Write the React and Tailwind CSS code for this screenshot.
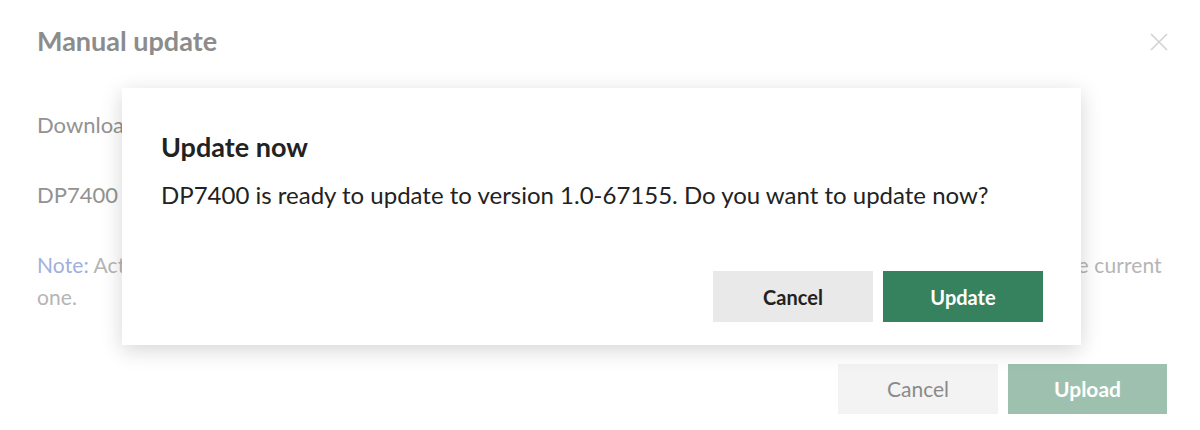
export default function App() {
    return (
        <div className="relative w-[1200px] h-[430px] bg-white overflow-hidden font-['Lato','Liberation_Sans',sans-serif]">
            {/* background modal */}
            <div className="flex flex-col pt-[25px] pl-[37px] pr-[33px]">
                <div className="flex items-center justify-between">
                    <h2 className="text-[27px] leading-[32px] font-bold text-[#8c8c8c]">Manual update</h2>
                    <svg width="20" height="20" viewBox="0 0 20 20" className="mr-[-2px] mt-[1px]">
                        <path d="M2 2 L18 18 M18 2 L2 18" stroke="#d2d2d2" strokeWidth="1.6" fill="none" />
                    </svg>
                </div>
                <p className="mt-[52px] text-[22px] leading-[32px] text-[#929292]">Download the firmware file from the support site and upload it here.</p>
                <p className="mt-[38px] text-[22px] leading-[32px] text-[#929292]">DP7400 current firmware version: 1.0-66012</p>
                <p className="mt-[38px] text-[21px] leading-[32px] tracking-[0.1px] text-[#b5b5b5] whitespace-nowrap">
                    <span className="text-[#9fb0dc]">Note:</span> Activating the uploaded firmware will restart the device, and then the new firmware version will replace the current<br />one.
                </p>
                <div className="flex justify-end gap-[10px] mt-[51px]">
                    <button className="w-[160px] h-[50px] bg-[#f3f3f3] text-[#8a8a8a] text-[21px]">Cancel</button>
                    <button className="w-[159px] h-[50px] bg-[#9dc1ae] text-white text-[21px] font-bold">Upload</button>
                </div>
            </div>

            {/* confirm dialog */}
            <div className="absolute left-[122px] top-[88px] w-[959px] h-[257px] bg-white shadow-[0_5px_20px_rgba(0,0,0,0.17)] flex flex-col pt-[44px] pl-[39px] pr-[38px]">
                <h3 className="text-[27px] leading-[30px] font-bold text-[#222]">Update now</h3>
                <p className="mt-[18px] text-[24px] leading-[30px] text-[#222]">DP7400 is ready to update to version 1.0-67155. Do you want to update now?</p>
                <div className="flex justify-end gap-[10px] mt-[61px]">
                    <button className="w-[160px] h-[51px] bg-[#e9e9e9] text-[#222] text-[20px] font-bold">Cancel</button>
                    <button className="w-[160px] h-[51px] bg-[#37825e] text-white text-[20px] font-bold">Update</button>
                </div>
            </div>
        </div>
    );
}
